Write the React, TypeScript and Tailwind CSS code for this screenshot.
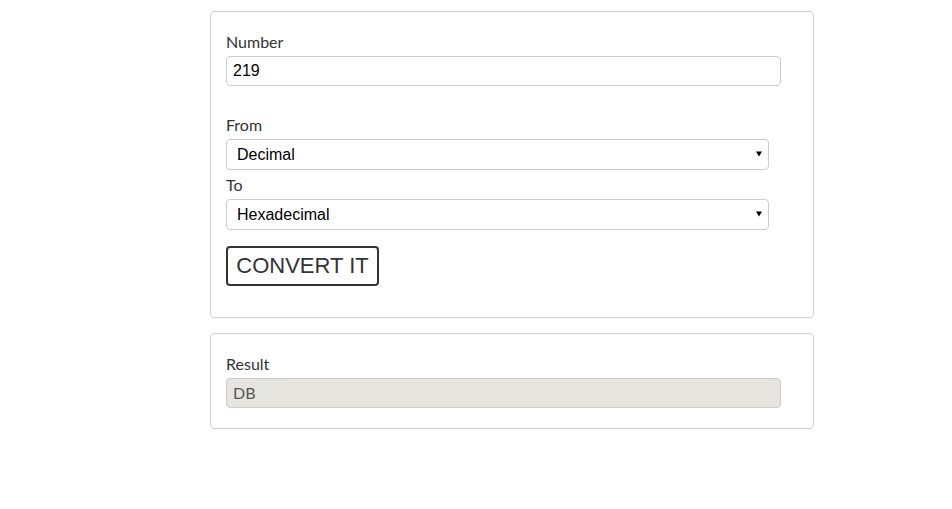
import React from "react";

const lato = { fontFamily: "Lato, 'Open Sans', sans-serif" };

function Arrow() {
  return (
    <svg
      className="pointer-events-none absolute right-[7px] top-[12px]"
      width="6"
      height="6"
      viewBox="0 0 6 6"
    >
      <path d="M0 0.5 H6 L3 5.5 Z" fill="#000" />
    </svg>
  );
}

function Select({ value }: { value: string }) {
  return (
    <div className="relative w-[543px]">
      <select
        defaultValue={value}
        className="block h-[31px] w-full appearance-none rounded-[4px] border border-[#cccccc] bg-white pl-[10px] pr-6 text-[16px] text-black outline-none"
        style={{ fontFamily: "'Liberation Sans', Arial, sans-serif" }}
      >
        <option>Binary</option>
        <option>Octal</option>
        <option>Decimal</option>
        <option>Hexadecimal</option>
      </select>
      <Arrow />
    </div>
  );
}

export default function App() {
  return (
    <div className="min-h-[509px] w-[952px] bg-white pt-[11px]" style={lato}>
      <div className="ml-[210px] w-[604px]">
        <div className="rounded-[4px] border border-[#d2d2d2] px-[15px] pb-[31px] pt-[20px]">
          <label className="mb-[4px] block text-[16px] leading-[20px] text-[#333333]">Number</label>
          <input
            defaultValue="219"
            className="block h-[30px] w-[555px] rounded-[4px] border border-[#cccccc] px-[6px] text-[16px] text-black outline-none"
            style={{ fontFamily: "'Liberation Sans', Arial, sans-serif" }}
          />
          <label className="mb-[4px] mt-[29px] block text-[16px] leading-[20px] text-[#333333]">From</label>
          <Select value="Decimal" />
          <label className="mb-[4px] mt-[5px] block text-[16px] leading-[20px] text-[#333333]">To</label>
          <Select value="Hexadecimal" />
          <button
            className="mt-[16px] flex h-[40px] w-[153px] items-center justify-center rounded-[4px] border-2 border-[#333333] bg-white text-[22px] leading-none text-[#333333]"
            style={{ fontFamily: "'Liberation Sans', Arial, sans-serif" }}
          >
            CONVERT IT
          </button>
        </div>
        <div className="mt-[15px] rounded-[4px] border border-[#d2d2d2] px-[15px] pb-[20px] pt-[20px]">
          <label className="mb-[4px] block text-[16px] leading-[20px] text-[#333333]">Result</label>
          <input
            readOnly
            value="DB"
            className="block h-[30px] w-[555px] rounded-[4px] border border-[#cccccc] bg-[#e6e5df] px-[6px] pb-[2px] text-[16px] text-[#555555] outline-none"
            style={lato}
          />
        </div>
      </div>
    </div>
  );
}
